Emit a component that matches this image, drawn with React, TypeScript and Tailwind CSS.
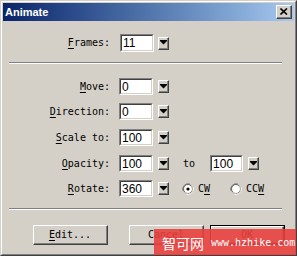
import React from "react";

const mono = "font-['DejaVu_Sans_Mono','Liberation_Mono',monospace] text-[10px] text-black";

// sunken text box (classic win32 edit)
const Field = ({ value, className }: { value: string; className: string }) => (
  <div className={`shrink-0 border border-t-[#808080] border-l-[#808080] border-r-white border-b-white ${className}`}>
    <div className="h-full flex items-center bg-white pl-[1px] border border-t-[#404040] border-l-[#404040] border-r-[#d4d0c8] border-b-[#d4d0c8] font-['Liberation_Sans',Arial,sans-serif] text-[12px] leading-none text-black">
      {value}
    </div>
  </div>
);

// small combo arrow button
const Drop = ({ className = "" }: { className?: string }) => (
  <div className={`shrink-0 w-[11px] h-[13px] border border-t-white border-l-white border-r-[#404040] border-b-[#404040] ${className}`}>
    <div className="h-full flex items-center justify-center bg-[#d4d0c8] border-r border-b border-[#808080]">
      <svg width="7" height="5" viewBox="0 0 7 5">
        <rect x="0" y="0" width="7" height="1" fill="#000" />
        <polygon points="0,1 7,1 3.5,4.5" fill="#000" />
      </svg>
    </div>
  </div>
);

const Radio = ({ checked, className = "" }: { checked?: boolean; className?: string }) => (
  <svg width="12" height="12" viewBox="0 0 12 12" className={`shrink-0 ${className}`}>
    <path d="M1 8 A5.5 5.5 0 0 1 8 1" stroke="#808080" strokeWidth="1" fill="none" />
    <path d="M4 11 A5.5 5.5 0 0 0 11 4" stroke="#ffffff" strokeWidth="1" fill="none" />
    <circle cx="6" cy="6" r="4.5" fill="#fff" stroke="#404040" strokeWidth="0.8" />
    <path d="M3 9.5 A4.5 4.5 0 0 0 9.5 3" stroke="#d4d0c8" strokeWidth="1" fill="none" />
    {checked && <circle cx="6" cy="6" r="1.6" fill="#000" />}
  </svg>
);

const Label = ({ first, rest }: { first: string; rest: string }) => (
  <div className={`w-[107px] shrink-0 text-right leading-none ${mono}`}>
    <span className="underline underline-offset-2">{first}</span>
    {rest}
  </div>
);

const Separator = ({ className = "" }: { className?: string }) => (
  <div className={`ml-[6px] w-[273px] ${className}`}>
    <div className="h-px bg-[#808080]" />
    <div className="h-px bg-white" />
  </div>
);

const Button = ({ children, isDefault }: { children: React.ReactNode; isDefault?: boolean }) => (
  <div className={`shrink-0 h-[20px] ${isDefault ? "w-[75px] border border-black" : "w-[75px]"}`}>
    <div className="h-full border border-t-white border-l-white border-r-[#404040] border-b-[#404040]">
      <div className={`h-full flex items-center justify-center border-r border-b border-[#808080] leading-none ${mono}`}>
        {children}
      </div>
    </div>
  </div>
);

export default function App() {
  return (
    <div className="relative w-[297px] h-[256px] overflow-hidden border border-t-[#d4d0c8] border-l-[#d4d0c8] border-r-[#404040] border-b-[#404040] bg-[#d4d0c8]">
      <div className="h-full border border-t-white border-l-white border-r-[#808080] border-b-[#808080] p-px flex flex-col">
        {/* title bar */}
        <div className="h-[18px] shrink-0 flex items-center justify-between pl-[2px] pr-[2px] bg-gradient-to-r from-[#0a246a] to-[#a6caf0]">
          <span className="font-['Liberation_Sans',Arial,sans-serif] text-[11px] font-bold text-white leading-none">Animate</span>
          <div className="w-[16px] h-[14px] border border-t-white border-l-white border-r-[#404040] border-b-[#404040]">
            <div className="h-full flex items-center justify-center bg-[#d4d0c8] border-r border-b border-[#808080]">
              <svg width="8" height="7" viewBox="0 0 8 7">
                <path d="M0.5 0.5 L7 6.5 M7 0.5 L0.5 6.5" stroke="#000" strokeWidth="1.6" />
              </svg>
            </div>
          </div>
        </div>

        {/* body */}
        <div className="flex flex-col">
          <div className="mt-[13px] flex items-center h-[18px]">
            <Label first="F" rest="rames:" />
            <Field value="11" className="ml-[10px] w-[34px] h-[18px]" />
            <Drop className="ml-[4px]" />
          </div>

          <Separator className="mt-[10px]" />

          <div className="mt-[14px] flex items-center h-[17px]">
            <Label first="M" rest="ove:" />
            <Field value="0" className="ml-[9px] w-[34px] h-[17px]" />
            <Drop className="ml-[5px]" />
          </div>
          <div className="mt-[8px] flex items-center h-[17px]">
            <Label first="D" rest="irection:" />
            <Field value="0" className="ml-[9px] w-[34px] h-[17px]" />
            <Drop className="ml-[5px]" />
          </div>
          <div className="mt-[9px] flex items-center h-[17px]">
            <Label first="S" rest="cale to:" />
            <Field value="100" className="ml-[9px] w-[34px] h-[17px]" />
            <Drop className="ml-[5px]" />
          </div>
          <div className="mt-[9px] flex items-center h-[17px]">
            <Label first="O" rest="pacity:" />
            <Field value="100" className="ml-[9px] w-[34px] h-[17px]" />
            <Drop className="ml-[5px]" />
            <span className={`ml-[14px] leading-none ${mono}`}>to</span>
            <Field value="100" className="ml-[15px] w-[33px] h-[17px]" />
            <Drop className="ml-[5px]" />
          </div>
          <div className="mt-[8px] flex items-center h-[17px]">
            <Label first="R" rest="otate:" />
            <Field value="360" className="ml-[9px] w-[34px] h-[17px]" />
            <Drop className="ml-[5px]" />
            <Radio checked className="ml-[13px]" />
            <span className={`ml-[4px] leading-none ${mono}`}>
              C<span className="underline underline-offset-2">W</span>
            </span>
            <Radio className="ml-[20px]" />
            <span className={`ml-[4px] leading-none ${mono}`}>
              CC<span className="underline underline-offset-2">W</span>
            </span>
          </div>

          <Separator className="mt-[11px]" />

          <div className="mt-[15px] ml-[30px] flex items-center">
            <Button>
              <span className="underline underline-offset-2">E</span>dit...
            </Button>
            <div className="ml-[21px]">
              <Button>Cancel</Button>
            </div>
            <div className="ml-[6px]">
              <Button isDefault>OK</Button>
            </div>
          </div>
        </div>
      </div>

      {/* site watermark over the corner */}
      <div className="absolute right-[-1px] bottom-[-1px] w-[143px] h-[27px] bg-[#e8403e]/90 flex items-center pl-[8px] gap-[7px] text-white">
        <span className="font-['Noto_Sans_CJK_SC',sans-serif] text-[14px] leading-none">智可网</span>
        <span className="font-['DejaVu_Sans_Mono','Liberation_Mono',monospace] text-[10px] leading-none">www.hzhike.com</span>
      </div>
    </div>
  );
}
